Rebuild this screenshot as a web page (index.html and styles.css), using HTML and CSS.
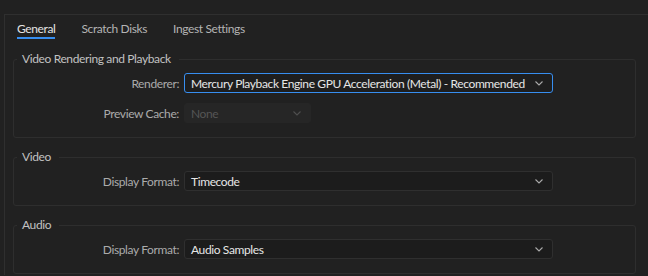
FILE: index.html
```html
<!DOCTYPE html>
<html>
<head>
<meta charset="utf-8">
<link rel="stylesheet" href="styles.css">
</head>
<body>
<div class="panel">
  <div class="tabs">
    <div class="tab active">General</div>
    <div class="tab">Scratch Disks</div>
    <div class="tab">Ingest Settings</div>
  </div>

  <fieldset class="group">
    <legend>Video Rendering and Playback</legend>
    <div class="row">
      <span class="label">Renderer:</span>
      <div class="select focused wide"><span>Mercury Playback Engine GPU Acceleration (Metal) - Recommended</span><svg class="chev" width="8" height="5" viewBox="0 0 8 5"><polyline points="0.5,0.5 4,4 7.5,0.5"/></svg></div>
    </div>
    <div class="row">
      <span class="label">Preview Cache:</span>
      <div class="select disabled narrow"><span>None</span><svg class="chev" width="8" height="5" viewBox="0 0 8 5"><polyline points="0.5,0.5 4,4 7.5,0.5"/></svg></div>
    </div>
  </fieldset>

  <fieldset class="group">
    <legend>Video</legend>
    <div class="row">
      <span class="label">Display Format:</span>
      <div class="select wide"><span>Timecode</span><svg class="chev" width="8" height="5" viewBox="0 0 8 5"><polyline points="0.5,0.5 4,4 7.5,0.5"/></svg></div>
    </div>
  </fieldset>

  <fieldset class="group">
    <legend>Audio</legend>
    <div class="row">
      <span class="label">Display Format:</span>
      <div class="select wide"><span>Audio Samples</span><svg class="chev" width="8" height="5" viewBox="0 0 8 5"><polyline points="0.5,0.5 4,4 7.5,0.5"/></svg></div>
    </div>
  </fieldset>
</div>
</body>
</html>
```
FILE: styles.css
```css
html, body {
  margin: 0;
  padding: 0;
  background: #212121;
  height: 276px;
  overflow: hidden;
}
body {
  font-family: Lato, "Open Sans", sans-serif;
  font-size: 12px;
  letter-spacing: -0.38px;
  color: #b4b4b4;
  white-space: nowrap;
}
.panel {
  margin: 14px 0 0 4px;
  border-top: 1px solid #2f2f2f;
  border-left: 1px solid #2f2f2f;
  padding-left: 8px;
  height: 261px;
  box-sizing: border-box;
  overflow: hidden;
}
.tabs {
  display: flex;
  gap: 26px;
  margin-left: 4px;
}
.tab {
  line-height: 16px;
  padding-top: 6px;
  border-bottom: 2px solid transparent;
  color: #b4b4b4;
}
.tab.active {
  color: #e4e4e4;
  border-bottom-color: #378ef0;
}
.group {
  margin: 12px 12px 0 0;
  padding: 6px 0 14px 0;
  border: 1px solid #2e2e2e;
  border-radius: 3px;
  display: flex;
  flex-direction: column;
  gap: 10px;
}
.group + .group {
  margin-top: 11px;
}
.group legend {
  margin-left: 3px;
  padding: 0 8px 0 5px;
  line-height: 16px;
  color: #c2c2c2;
}
.row {
  display: grid;
  grid-template-columns: 165px auto;
  column-gap: 5px;
  align-items: center;
}
.label {
  text-align: right;
  color: #ababab;
}
.select {
  height: 20px;
  box-sizing: border-box;
  border: 1px solid #2f2f2f;
  border-radius: 3px;
  background: #1c1c1c;
  display: flex;
  align-items: center;
  justify-content: space-between;
  padding: 0 9px 0 6px;
  color: #e6e6e6;
  overflow: hidden;
}
.select.wide { width: 369px; }
.select.narrow { width: 127px; }
.select.focused {
  border-color: #378ef0;
  background: #1e1e1e;
}
.select.disabled {
  background: #262626;
  border-color: #262626;
  color: #555555;
}
.chev { flex: none; }
.chev polyline {
  fill: none;
  stroke: #a8a8a8;
  stroke-width: 1.1;
}
.select.disabled .chev polyline {
  stroke: #4e4e4e;
}
```
